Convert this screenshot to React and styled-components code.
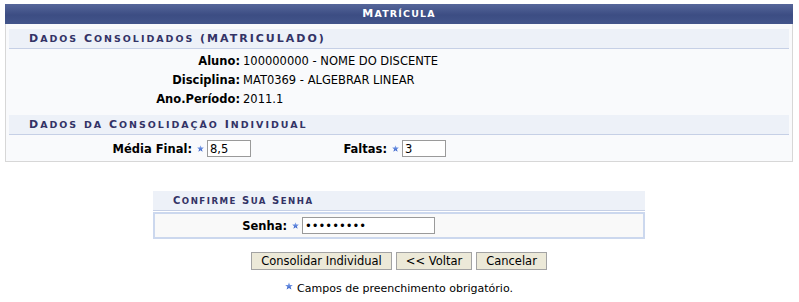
import React from 'react';
import styled, { createGlobalStyle } from 'styled-components';

const GlobalStyle = createGlobalStyle`
	body {
		margin: 0;
		background: #fff;
		font-family: "DejaVu Sans", Verdana, sans-serif;
		font-size: 11.5px;
		color: #000;
	}
`;

// small caps drawn by hand: capitals stay full size, the rest is set smaller
const SmallCaps = ({ text }) =>
	text.split(/([^a-zà-ÿ]+)/).filter(Boolean).map((part, i) =>
		/[a-zà-ÿ]/.test(part) ? <Lower key={i}>{part}</Lower> : <span key={i}>{part}</span>
	);

const Star = ({ small }) => (
	<StarIcon viewBox="0 0 10 10" small={small}>
		<defs>
			<linearGradient id="starFill" x1="0" y1="0" x2="0" y2="1">
				<stop offset="0" stopColor="#9ab8f2" />
				<stop offset="1" stopColor="#2a56c6" />
			</linearGradient>
		</defs>
		<polygon
			points="5,0.3 6.3,3.6 9.8,3.7 7,5.9 8,9.5 5,7.4 2,9.5 3,5.9 0.2,3.7 3.7,3.6"
			fill="url(#starFill)"
		/>
	</StarIcon>
);

const Field = ({ label, value, width, type = 'text' }) => (
	<>
		<FieldLabel>{label}</FieldLabel>
		<FieldValue>
			<Star />
			<Input type={type} defaultValue={value} style={{ width }} />
		</FieldValue>
	</>
);

export default function App() {
	return (
		<Page>
			<GlobalStyle />
			<Panel>
				<Title><SmallCaps text="Matrícula" /></Title>
				<PanelBody>
					<Caption><SmallCaps text="Dados Consolidados (MATRICULADO)" /></Caption>
					<InfoList>
						<InfoLabel>Aluno:</InfoLabel>
						<InfoValue>100000000 - NOME DO DISCENTE</InfoValue>
						<InfoLabel>Disciplina:</InfoLabel>
						<InfoValue>MAT0369 - ALGEBRAR LINEAR</InfoValue>
						<InfoLabel>Ano.Período:</InfoLabel>
						<InfoValue>2011.1</InfoValue>
					</InfoList>
					<Caption gap><SmallCaps text="Dados da Consolidação Individual" /></Caption>
					<GradeRow>
						<Field label="Média Final:" value="8,5" width={44} />
						<Field label="Faltas:" value="3" width={44} />
					</GradeRow>
				</PanelBody>
			</Panel>

			<Confirm>
				<Caption small><SmallCaps text="Confirme Sua Senha" /></Caption>
				<ConfirmBody>
					<Field label="Senha:" value="123456789" width={133} type="password" />
				</ConfirmBody>
			</Confirm>

			<Buttons>
				<Button width={141}>Consolidar Individual</Button>
				<Button width={76}>&lt;&lt; Voltar</Button>
				<Button width={71}>Cancelar</Button>
			</Buttons>

			<Required>
				<Star small />
				<span>Campos de preenchimento obrigatório.</span>
			</Required>
		</Page>
	);
}

const Page = styled.div`
	width: 788px;
	padding: 4px 6px 0 5px;
`;

const Panel = styled.div`
	background: #f9fafc;
`;

const Lower = styled.span`
	font-size: 0.86em;
	text-transform: uppercase;
`;

const Title = styled.div`
	height: 20px;
	line-height: 20px;
	background: linear-gradient(#56669a, #3c4d83 55%, #43558b);
	color: #fff;
	font-size: 11px;
	font-weight: bold;
	letter-spacing: 1.2px;
	text-align: center;
`;

const PanelBody = styled.div`
	border: 1px solid #d7d7d7;
	border-top: none;
	padding: 5px 3px 0;
`;

const Caption = styled.div`
	height: 19px;
	line-height: 19px;
	margin-top: ${({ gap }) => (gap ? '7px' : '0')};
	padding-left: 20px;
	background: #edf1f8;
	border-bottom: 1px solid #c6d0e6;
	color: #333366;
	font-size: ${({ small }) => (small ? '10px' : '11px')};
	font-weight: bold;
	letter-spacing: ${({ small }) => (small ? '1.5px' : '2px')};
	white-space: nowrap;
`;

const InfoList = styled.div`
	display: grid;
	grid-template-columns: 231px 1fr;
	grid-auto-rows: 19px;
	column-gap: 3px;
	align-items: center;
	margin-top: 2px;
`;

const InfoLabel = styled.div`
	text-align: right;
	font-weight: bold;
`;

const InfoValue = styled.div``;

const GradeRow = styled.div`
	display: grid;
	grid-template-columns: 183px 120px 67px 1fr;
	column-gap: 4px;
	align-items: center;
	padding: 5px 0 4px;
`;

const FieldLabel = styled.div`
	text-align: right;
	font-weight: bold;
	white-space: nowrap;
`;

const FieldValue = styled.div`
	display: flex;
	align-items: center;
	gap: 3px;
	padding-left: 1px;
`;

const StarIcon = styled.svg`
	width: ${({ small }) => (small ? 8 : 7)}px;
	height: ${({ small }) => (small ? 8 : 7)}px;
	flex: none;
	align-self: ${({ small }) => (small ? 'flex-start' : 'center')};
`;

const Input = styled.input`
	box-sizing: border-box;
	height: 17px;
	margin: 0;
	padding: 0 2px;
	border: 1px solid #9a9a9a;
	background: #fff;
	font-family: "DejaVu Sans", Verdana, sans-serif;
	font-size: 11.5px;
	color: #000;
	outline: none;
`;

const Confirm = styled.div`
	width: 492px;
	margin: 29px auto 0;
`;

const ConfirmBody = styled.div`
	display: grid;
	grid-template-columns: 132px 1fr;
	column-gap: 4px;
	align-items: center;
	margin-top: 1px;
	padding: 3px 0;
	border: 2px solid #ccd8ee;
	background: #f9f9f9;
`;

const Buttons = styled.div`
	display: flex;
	justify-content: center;
	gap: 4px;
	margin-top: 13px;
`;

const Button = styled.button`
	width: ${({ width }) => width}px;
	height: 18px;
	margin: 0;
	padding: 0;
	border: 1px solid #a3a3a3;
	background: #ece9d8;
	font-family: "DejaVu Sans", Verdana, sans-serif;
	font-size: 11.5px;
	color: #000;
	line-height: 16px;
`;

const Required = styled.div`
	display: flex;
	justify-content: center;
	align-items: center;
	gap: 4px;
	margin-top: 12px;
	font-size: 11px;
	line-height: 13px;
`;
